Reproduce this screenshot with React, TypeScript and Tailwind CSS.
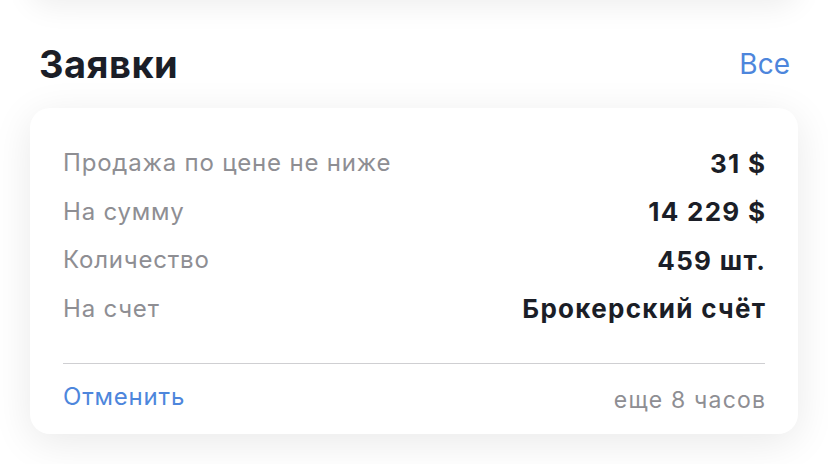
const rows = [
  { label: "Продажа по цене не ниже", value: "31 $" },
  { label: "На сумму", value: "14 229 $" },
  { label: "Количество", value: "459 шт." },
  { label: "На счет", value: "Брокерский счёт" },
];

export default function App() {
  return (
    <div
      className="w-[828px] h-[464px] overflow-hidden bg-white"
      style={{ fontFamily: "Inter, 'Noto Sans', sans-serif" }}
    >
      {/* bottom edge of the previous card, mostly scrolled away */}
      <div className="mx-[30px] -mt-[60px] h-[60px] rounded-b-[20px] bg-white shadow-[0_6px_30px_rgba(0,0,0,0.07)]" />

      <div className="flex h-[108px] items-center justify-between pl-[39px] pr-[38px] pt-[20px]">
        <h2 className="text-[38px] font-bold tracking-[0.5px] text-[#1b1e27]">Заявки</h2>
        <button className="text-[28px] text-[#4d86dc]">Все</button>
      </div>

      <div className="mx-[30px] rounded-[20px] bg-white px-[33px] pt-[31px] shadow-[0_8px_40px_rgba(0,0,0,0.09)]">
        <div className="flex flex-col">
          {rows.map((row) => (
            <div key={row.label} className="flex h-[48.5px] items-center justify-between">
              <span className="text-[24px] tracking-[0.8px] text-[#8e8e93]">{row.label}</span>
              <span className="-mr-[1.3px] text-[26px] font-bold tracking-[1.3px] text-[#1b1e27]">
                {row.value}
              </span>
            </div>
          ))}
        </div>
        <div className="mt-[30px] h-px bg-[#cfcfd2]" />
        <div className="flex h-[70px] items-center justify-between pb-[4px]">
          <button className="text-[24px] tracking-[0.8px] text-[#4d86dc]">Отменить</button>
          <span className="-mr-[1.2px] mt-[6px] text-[23px] tracking-[1.2px] text-[#8e8e93]">еще 8 часов</span>
        </div>
      </div>
    </div>
  );
}
